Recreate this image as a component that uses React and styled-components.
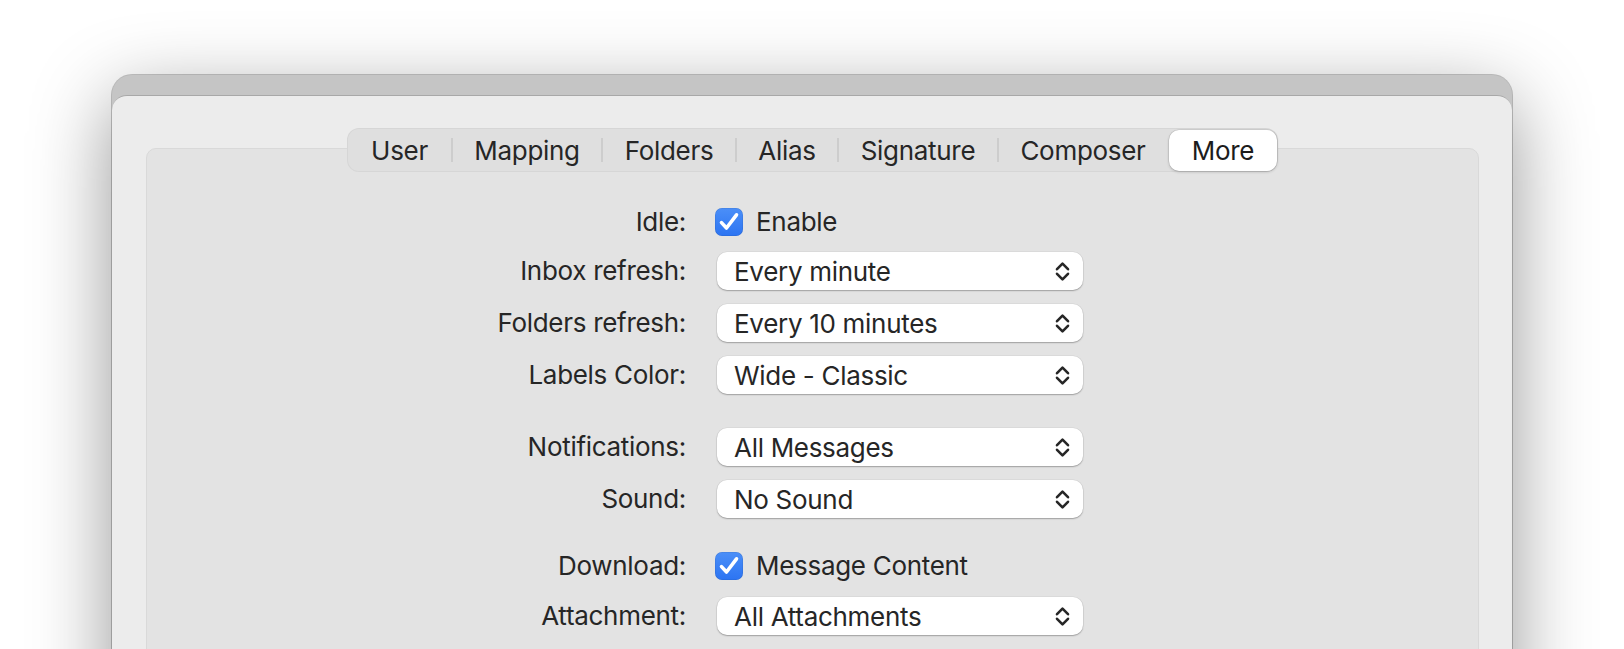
import styled, { createGlobalStyle, css } from "styled-components";

const GlobalStyle = createGlobalStyle`
	html, body {
		margin: 0;
		padding: 0;
		background: #ffffff;
	}
	body {
		font-family: Inter, "Noto Sans", "Liberation Sans", sans-serif;
		letter-spacing: -0.3px;
		-webkit-font-smoothing: antialiased;
	}
`;

const Stage = styled.div`
	width: 1624px;
	height: 649px;
	overflow: hidden;
	box-sizing: border-box;
	padding: 75px 0 0 112px;
`;

const Window = styled.div`
	width: 1400px;
	height: 640px;
	box-sizing: border-box;
	padding-top: 20px;
	display: flex;
	flex-direction: column;
	background: #c5c5c5;
	border-radius: 20px 20px 0 0;
	box-shadow: 0 0 0 1px rgba(0, 0, 0, 0.22), 0 24px 80px rgba(0, 0, 0, 0.42);
`;

const Sheet = styled.div`
	flex: 1;
	box-sizing: border-box;
	padding: 52px 33px 0 34px;
	background: #ececec;
	border-top: 1px solid #a8a8a8;
	border-radius: 15px 15px 0 0;
`;

const GroupBox = styled.div`
	height: 600px;
	display: flex;
	flex-direction: column;
	align-items: center;
	background: #e3e3e3;
	border: 1px solid #d9d9d9;
	border-radius: 10px;
`;

const TabBar = styled.div`
	margin-top: -21px;
	height: 44px;
	display: flex;
	align-items: center;
	background: #dfdfdf;
	border-radius: 12px;
	box-shadow: inset 0 0 0 1px rgba(0, 0, 0, 0.04);
`;

const Tab = styled.div`
	position: relative;
	width: ${(p) => p.$w}px;
	height: 44px;
	box-sizing: border-box;
	display: flex;
	align-items: center;
	justify-content: center;
	font-size: 26px;
	color: #262626;

	${(p) =>
		p.$sep &&
		css`
			&::before {
				content: "";
				position: absolute;
				left: -1px;
				top: 10px;
				width: 2px;
				height: 24px;
				background: #cdcdcd;
			}
		`}

	${(p) =>
		p.$active &&
		css`
			height: 41px;
			margin: 0 1px;
			width: ${p.$w - 2}px;
			background: #ffffff;
			color: #1c1c1c;
			border-radius: 10px;
			box-shadow: 0 1px 3px rgba(0, 0, 0, 0.2), 0 0 0 0.5px rgba(0, 0, 0, 0.12);
		`}
`;

const Form = styled.div`
	margin-top: 36px;
	width: 100%;
	display: flex;
	flex-direction: column;
`;

const Row = styled.div`
	display: grid;
	grid-template-columns: 539px 366px;
	column-gap: 31px;
	align-items: center;
	margin-top: ${(p) => p.$gap || 0}px;
`;

const Label = styled.div`
	text-align: right;
	font-size: 26px;
	line-height: 1;
	color: #262626;
`;

const Popup = styled.div`
	height: 38px;
	box-sizing: border-box;
	padding: 0 13px 0 17px;
	display: flex;
	align-items: center;
	justify-content: space-between;
	background: #ffffff;
	border-radius: 10px;
	font-size: 26px;
	color: #262626;
	box-shadow: 0 1px 1.5px rgba(0, 0, 0, 0.28), 0 0 0 0.5px rgba(0, 0, 0, 0.07);
`;

const CheckRow = styled.div`
	height: 28px;
	margin-left: -2px;
	display: flex;
	align-items: center;
	gap: 13px;
	font-size: 26px;
	line-height: 1;
	color: #262626;
`;

const CheckBox = styled.div`
	width: 28px;
	height: 28px;
	flex-shrink: 0;
	display: flex;
	align-items: center;
	justify-content: center;
	border-radius: 7px;
	background: linear-gradient(#4b8ff8, #2c74f2);
	box-shadow: inset 0 0 0 0.5px rgba(0, 0, 0, 0.12);
`;

const Chevrons = () => (
	<svg width="15" height="22" viewBox="0 0 15 22" fill="none">
		<path
			d="M2 9.2 L7.5 3.6 L13 9.2 M2 13.8 L7.5 19.4 L13 13.8"
			stroke="#262626"
			strokeWidth="2.6"
			strokeLinecap="round"
			strokeLinejoin="round"
		/>
	</svg>
);

const Check = () => (
	<svg width="28" height="28" viewBox="0 0 28 28" fill="none">
		<path
			d="M6.5 14.6 L11.5 20 L21.5 6.8"
			stroke="#ffffff"
			strokeWidth="3.6"
			strokeLinecap="round"
			strokeLinejoin="round"
		/>
	</svg>
);

const tabs = [
	{ name: "User", w: 105 },
	{ name: "Mapping", w: 150 },
	{ name: "Folders", w: 134 },
	{ name: "Alias", w: 102 },
	{ name: "Signature", w: 160 },
	{ name: "Composer", w: 170 },
	{ name: "More", w: 110, active: true },
];

const rows = [
	{ label: "Idle:", check: "Enable" },
	{ label: "Inbox refresh:", value: "Every minute", gap: 16 },
	{ label: "Folders refresh:", value: "Every 10 minutes", gap: 14 },
	{ label: "Labels Color:", value: "Wide - Classic", gap: 14 },
	{ label: "Notifications:", value: "All Messages", gap: 34 },
	{ label: "Sound:", value: "No Sound", gap: 14 },
	{ label: "Download:", check: "Message Content", gap: 34 },
	{ label: "Attachment:", value: "All Attachments", gap: 17 },
];

const App = () => {
	return (
		<>
			<GlobalStyle />
			<Stage>
				<Window>
					<Sheet>
						<GroupBox>
							<TabBar>
								{tabs.map((t, i) => (
									<Tab
										key={t.name}
										$w={t.w}
										$active={t.active}
										$sep={i > 0 && !t.active}
									>
										{t.name}
									</Tab>
								))}
							</TabBar>
							<Form>
								{rows.map((r) => (
									<Row key={r.label} $gap={r.gap}>
										<Label>{r.label}</Label>
										{r.check ? (
											<CheckRow>
												<CheckBox>
													<Check />
												</CheckBox>
												{r.check}
											</CheckRow>
										) : (
											<Popup>
												{r.value}
												<Chevrons />
											</Popup>
										)}
									</Row>
								))}
							</Form>
						</GroupBox>
					</Sheet>
				</Window>
			</Stage>
		</>
	);
};

export default App;
